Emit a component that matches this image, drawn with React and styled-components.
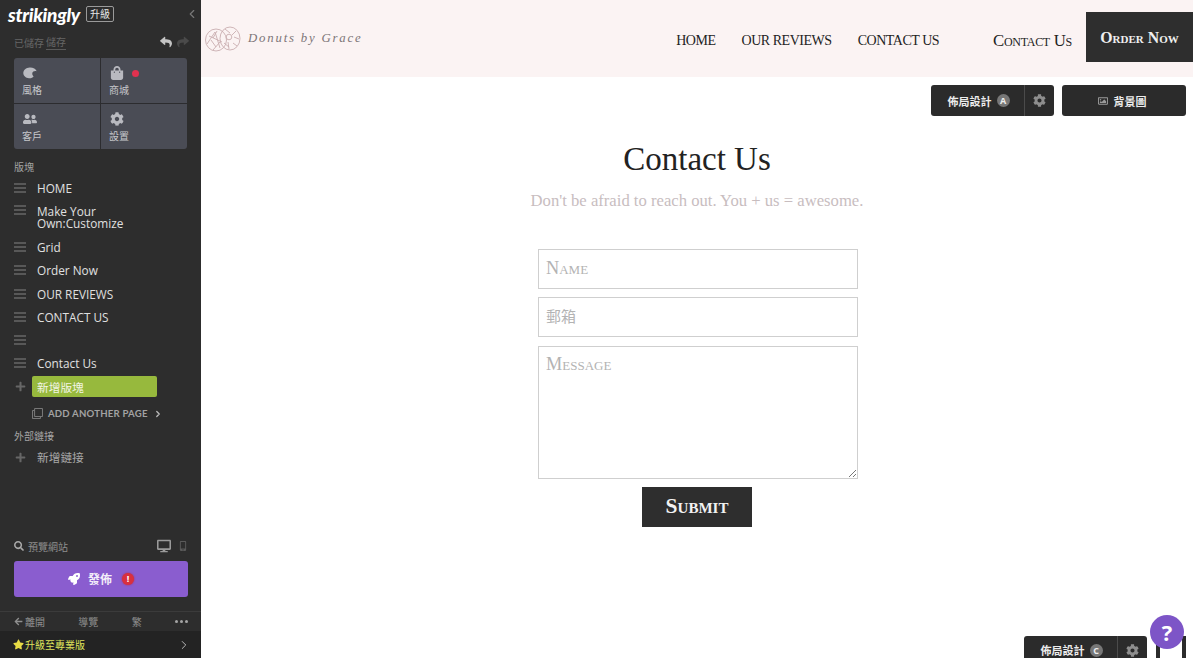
import React from "react";
import styled, { createGlobalStyle } from "styled-components";
import { FaShoppingBag, FaUserFriends, FaCog, FaReply, FaShare, FaRocket, FaSearch, FaStar, FaArrowLeft, FaPlus, FaRegImage, FaRegClone, FaMobileAlt, FaDesktop } from "react-icons/fa";
import { ChevronLeft, ChevronRight } from "lucide-react";

const CJK = `"Open Sans", "Noto Sans CJK TC", sans-serif`;
const SERIF = `"Liberation Serif", "Noto Sans CJK TC", serif`;

const Global = createGlobalStyle`
  html, body { margin: 0; padding: 0; height: 100%; overflow: hidden; background: #fff; }
  #root { height: 658px; }
  * { box-sizing: border-box; }
`;

const Page = styled.div`
  display: flex;
  width: 1193px;
  height: 658px;
  overflow: hidden;
  font-family: ${CJK};
`;

const Sidebar = styled.aside`
  width: 201px;
  flex: none;
  height: 100%;
  display: flex;
  flex-direction: column;
  background: #2d2d2d;
  color: #d6d6d6;
`;

const TopBar = styled.div`
  height: 28px;
  display: flex;
  align-items: center;
  padding: 0 2px 0 8px;
  flex: none;
`;
const Logo = styled.span`
  font: italic 900 19px/1 "Lato", sans-serif;
  letter-spacing: -0.3px;
  color: #fff;
  width: 78px;
`;
const UpgradeBadge = styled.span`
  width: 28px;
  height: 16px;
  border: 1px solid #9a9a9a;
  border-radius: 2px;
  font-size: 10px;
  line-height: 14px;
  text-align: center;
  color: #e6e6e6;
`;
const Collapse = styled.span`
  margin-left: auto;
  display: flex;
  color: #777;
`;

const SaveRow = styled.div`
  height: 30px;
  display: flex;
  align-items: center;
  padding: 0 12px 2px 14px;
  font-size: 10px;
  color: #666;
  flex: none;
`;
const SaveLink = styled.span`
  margin-left: 2px;
  border-bottom: 1px solid #5a5a5a;
`;
const UndoGroup = styled.span`
  margin-left: auto;
  display: flex;
  gap: 5px;
  font-size: 12px;
`;
const UndoIcon = styled.span`
  display: flex;
  color: ${p => (p.$off ? "#4a4a4a" : "#c4c4c4")};
`;

const Tiles = styled.div`
  margin: 0 14px;
  width: 173px;
  height: 91px;
  display: grid;
  grid-template-columns: 87px 86px;
  grid-template-rows: 45.5px 45.5px;
  border-radius: 3px;
  overflow: hidden;
  background: #4a4c55;
  flex: none;
`;
const Tile = styled.div`
  padding: 8px 0 0 8px;
  display: flex;
  flex-direction: column;
  gap: 3px;
  font-size: 10px;
  line-height: 14px;
  color: #c6c7cb;
  border-right: ${p => (p.$right ? "none" : "1px solid #2c2c2f")};
  border-bottom: ${p => (p.$bottom ? "none" : "1px solid #2c2c2f")};
`;
const TileIcon = styled.span`
  display: flex;
  align-items: center;
  gap: 8px;
  height: 14px;
  padding-left: 1px;
  font-size: 14px;
  color: #b9bac0;
`;
const RedDot = styled.i`
  width: 7px;
  height: 7px;
  border-radius: 50%;
  background: #e0314f;
`;

const SectionLabel = styled.div`
  padding-left: 14px;
  font-size: 10px;
  line-height: 14px;
  color: #a3a3a3;
  margin-top: ${p => p.$top || 0}px;
  flex: none;
`;
const Rows = styled.div`
  margin-top: 2px;
  display: flex;
  flex-direction: column;
  flex: none;
`;
const Row = styled.div`
  height: ${p => (p.$tall ? 36 : 23.3)}px;
  display: flex;
  align-items: ${p => (p.$tall ? "flex-start" : "center")};
  padding-left: 14px;
  font-size: 11.8px;
  line-height: 12px;
  color: ${p => (p.$dim ? "#a8a8a8" : "#e0e0e0")};
  padding-top: ${p => (p.$tall ? 6 : 0)}px;
`;
const Handle = styled.span`
  width: 12px;
  height: 10px;
  flex: none;
  margin-right: 11px;
  border-top: 2px solid #585858;
  border-bottom: 2px solid #585858;
  position: relative;
  &::after {
    content: "";
    position: absolute;
    left: 0;
    right: 0;
    top: 2px;
    height: 2px;
    background: #585858;
  }
`;
const PlusIcon = styled.span`
  width: 12px;
  flex: none;
  display: flex;
  justify-content: center;
  color: #666;
  font-size: 11px;
  margin-right: ${p => p.$gap}px;
`;
const AddSection = styled.div`
  width: 125px;
  height: 21px;
  display: flex;
  align-items: center;
  padding-left: 5px;
  background: #97b93d;
  border-radius: 2px;
  color: #f2f5e4;
  font-size: 11.7px;
`;
const AddPage = styled.div`
  height: 17px;
  margin-top: 7px;
  padding-left: 32px;
  display: flex;
  align-items: center;
  gap: 5px;
  font: 700 9.6px/1 "Lato", sans-serif;
  letter-spacing: 0.2px;
  color: #a2a2a2;
  flex: none;
`;
const SmallChevron = styled.span`
  display: flex;
  color: #bbb;
`;
const ExtLink = styled(Row)`
  margin-top: 2px;
  font-size: 11.7px;
  flex: none;
`;

const Bottom = styled.div`
  margin-top: auto;
  display: flex;
  flex-direction: column;
  flex: none;
`;
const PreviewRow = styled.div`
  height: 20px;
  display: flex;
  align-items: center;
  padding: 0 13px 0 14px;
  gap: 4px;
  font-size: 10px;
  color: #8d8d8d;
`;
const Devices = styled.span`
  margin-left: auto;
  display: flex;
  align-items: center;
  gap: 7px;
`;
const Device = styled.span`
  display: flex;
  font-size: ${p => p.$size}px;
  color: ${p => (p.$off ? "#5a5a5a" : "#9a9a9a")};
`;
const Publish = styled.div`
  margin: 5px 13px 0 14px;
  height: 36px;
  border-radius: 3px;
  background: #8a5dcf;
  display: flex;
  align-items: center;
  justify-content: center;
  gap: 8px;
  color: #f3eef9;
  font-size: 12px;
  font-weight: 700;
`;
const Alert = styled.span`
  width: 12px;
  height: 12px;
  margin-left: 2px;
  border-radius: 50%;
  background: #d9303f;
  box-shadow: 0 0 2px #b52a3e;
  color: #fff;
  font-size: 9px;
  line-height: 12px;
  text-align: center;
`;
const FootNav = styled.div`
  margin-top: 14px;
  height: 20px;
  border-top: 1px solid #3b3b3b;
  padding: 0 13px 0 14px;
  display: flex;
  align-items: center;
  justify-content: space-between;
  font-size: 10px;
  color: #8f8f8f;
`;
const Leave = styled.span`
  display: flex;
  align-items: center;
  gap: 2px;
`;
const Dots = styled.span`
  display: flex;
  gap: 2px;
`;
const Dot = styled.i`
  width: 3px;
  height: 3px;
  border-radius: 50%;
  background: #a5a5a5;
`;
const ProBar = styled.div`
  height: 27px;
  background: #232323;
  display: flex;
  align-items: center;
  padding: 0 10px 0 13px;
  gap: 1px;
  font-size: 10px;
  color: #dfe35c;
`;
const ProChevron = styled.span`
  margin-left: auto;
  display: flex;
  color: #c9c9c9;
`;

const Main = styled.main`
  flex: 1;
  min-width: 0;
  height: 100%;
  position: relative;
  overflow: hidden;
  background: #fff;
`;
const Header = styled.header`
  height: 77px;
  background: #fbf3f3;
  display: flex;
  align-items: center;
  padding-left: 4px;
`;
const Brand = styled.div`
  display: flex;
  align-items: center;
  gap: 7px;
  font: italic 400 12.8px/1 "Liberation Serif", serif;
  letter-spacing: 1.8px;
  color: #7d7678;
`;
const Nav = styled.nav`
  margin-left: auto;
  display: flex;
  align-items: center;
  height: 50px;
  margin-top: -3px;
`;
const NavLink = styled.a`
  margin-right: ${p => p.$mr}px;
  font: 400 14px/1 ${SERIF};
  letter-spacing: -0.47px;
  color: #232323;
  white-space: nowrap;
  padding-top: 8px;
`;
const SmallCapsLink = styled(NavLink)`
  font-size: 16.8px;
  font-variant: small-caps;
  letter-spacing: -0.3px;
`;
const OrderButton = styled.a`
  width: 107px;
  height: 50px;
  background: #2e2e2e;
  color: #efefef;
  display: flex;
  align-items: center;
  justify-content: center;
  font: 700 15.8px/1 ${SERIF};
  font-variant: small-caps;
  padding-top: 2px;
`;

const Tool = styled.div`
  position: absolute;
  display: flex;
  align-items: center;
  background: #2b2b2b;
  border-radius: 3px;
  color: #ececec;
  font-size: 11px;
  font-weight: 700;
  height: ${p => p.$h || 31}px;
  left: ${p => p.$left}px;
  top: ${p => p.$top}px;
  width: ${p => p.$w}px;
`;
const ToolMain = styled.span`
  flex: 1;
  display: flex;
  align-items: center;
  justify-content: center;
  gap: 5px;
  height: 100%;
  padding-left: 2px;
`;
const BackgroundMain = styled(ToolMain)`
  padding-left: 0;
  padding-right: 4px;
`;
const ToolGear = styled.span`
  width: 30px;
  height: 100%;
  display: flex;
  align-items: center;
  justify-content: center;
  border-left: 1px solid #4b4b4b;
  color: #8e8e8e;
  font-size: 13px;
`;
const Key = styled.span`
  width: 13px;
  height: 13px;
  border-radius: 50%;
  background: #777;
  color: #eee;
  font-size: 9px;
  line-height: 13px;
  text-align: center;
`;
const ImgIcon = styled.span`
  display: flex;
  font-size: 10px;
  color: #9a9a9a;
  margin-right: 1px;
`;

const Section = styled.section`
  display: flex;
  flex-direction: column;
  align-items: center;
`;
const Title = styled.h1`
  margin: 61px 0 0;
  font: 400 33px/42px ${SERIF};
  color: #222;
`;
const Sub = styled.p`
  margin: 9px 0 0;
  font: 400 16.65px/24px ${SERIF};
  color: #c8bdbf;
`;
const Form = styled.form`
  margin: 36px 0 0 2px;
  display: flex;
  flex-direction: column;
  align-items: center;
  width: 320px;
`;
const Field = styled.div`
  width: 320px;
  height: ${p => p.$h || 40}px;
  margin-bottom: ${p => p.$mb || 8}px;
  padding: ${p => (p.$area ? "7px 7px" : `0 7px ${p.$lift || 0}px`)};
  display: flex;
  align-items: ${p => (p.$area ? "flex-start" : "center")};
  border: 1px solid #cfcfcf;
  font: 400 ${p => p.$fs || 18.3}px/20px ${SERIF};
  font-variant: small-caps;
  color: #b3b3b3;
  position: relative;
`;
const Grip = styled.svg`
  position: absolute;
  right: 0;
  bottom: 0;
  width: 9px;
  height: 9px;
`;
const Submit = styled.div`
  width: 110px;
  height: 40px;
  margin-right: 2px;
  background: #2e2e2e;
  color: #f2f2f2;
  display: flex;
  align-items: center;
  justify-content: center;
  font: 700 21.5px/1 ${SERIF};
  font-variant: small-caps;
`;
const Help = styled.div`
  position: absolute;
  left: 949px;
  top: 615px;
  width: 34px;
  height: 34px;
  border-radius: 50%;
  background: #7d55c7;
  color: #fff;
  display: flex;
  align-items: center;
  justify-content: center;
  font: 700 22px/1 "Open Sans", sans-serif;
  z-index: 2;
`;
const Outlined = styled.div`
  position: absolute;
  left: 955px;
  top: 636px;
  width: 30px;
  height: 40px;
  border: 4px solid #2b2b2b;
`;

const DonutLogo = () => (
  <svg width="36" height="28" viewBox="0 0 36 28" fill="none" stroke="#c9aeb0" strokeWidth="0.9">
    <ellipse cx="11" cy="15" rx="10.5" ry="11" />
    <ellipse cx="25" cy="13.5" rx="10" ry="11.5" />
    <circle cx="24" cy="12" r="2.8" />
    <path d="M2 19 L10 7 L15 23 M4 11 L17 17 M8 25 L15 17 M6 15 L11 22 M12 6 L8 13 M20 4 L25 8 M28 18 L32 21 M19 18 L24 22 M31 6 L27 10 M29 12 L34 14 M23 17 L24 24" />
  </svg>
);

const PaletteIcon = () => (
  <svg width="14" height="12" viewBox="0 0 14 12" fill="currentColor">
    <path d="M6.8 0.5C10 0.4 13 1.8 13.7 4.2 11.6 3.6 9.6 4.4 9.3 6.1 9 7.8 9.9 8.7 10.6 9.6 9.6 10.9 7.9 11.5 6 11.3 2.7 11 0.3 8.8 0.3 6 0.3 3 3 0.6 6.8 0.5Z" />
  </svg>
);

const SECTIONS = ["Grid", "Order Now", "OUR REVIEWS", "CONTACT US", "", "Contact Us"];

export default function App() {
  return (
    <Page>
      <Global />
      <Sidebar>
        <TopBar>
          <Logo>strikingly</Logo>
          <UpgradeBadge>升級</UpgradeBadge>
          <Collapse><ChevronLeft size={14} strokeWidth={2} /></Collapse>
        </TopBar>
        <SaveRow>
          已儲存<SaveLink>儲存</SaveLink>
          <UndoGroup>
            <UndoIcon><FaReply /></UndoIcon>
            <UndoIcon $off><FaShare /></UndoIcon>
          </UndoGroup>
        </SaveRow>
        <Tiles>
          <Tile><TileIcon><PaletteIcon /></TileIcon>風格</Tile>
          <Tile $right><TileIcon><FaShoppingBag /><RedDot /></TileIcon>商城</Tile>
          <Tile $bottom><TileIcon><FaUserFriends /></TileIcon>客戶</Tile>
          <Tile $right $bottom><TileIcon><FaCog /></TileIcon>設置</Tile>
        </Tiles>
        <SectionLabel $top={11}>版塊</SectionLabel>
        <Rows>
          <Row><Handle />HOME</Row>
          <Row $tall><Handle /><span>Make Your<br />Own:Customize</span></Row>
          {SECTIONS.map((s, i) => <Row key={i}><Handle />{s}</Row>)}
          <Row>
            <PlusIcon $gap={6}><FaPlus /></PlusIcon>
            <AddSection>新增版塊</AddSection>
          </Row>
        </Rows>
        <AddPage>
          <FaRegClone size={11} color="#777" />ADD ANOTHER PAGE<SmallChevron><ChevronRight size={10} strokeWidth={3} /></SmallChevron>
        </AddPage>
        <SectionLabel $top={7}>外部鏈接</SectionLabel>
        <ExtLink $dim>
          <PlusIcon $gap={11}><FaPlus /></PlusIcon>新增鏈接
        </ExtLink>
        <Bottom>
          <PreviewRow>
            <FaSearch size={10} color="#a8a8a8" />預覽網站
            <Devices>
              <Device $size={14}><FaDesktop /></Device>
              <Device $size={10} $off><FaMobileAlt /></Device>
            </Devices>
          </PreviewRow>
          <Publish><FaRocket size={12} color="#fff" />發佈<Alert>!</Alert></Publish>
          <FootNav>
            <Leave><FaArrowLeft size={9} />離開</Leave>
            <span>導覽</span>
            <span>繁</span>
            <Dots><Dot /><Dot /><Dot /></Dots>
          </FootNav>
          <ProBar>
            <FaStar size={11} color="#e8dc45" />升級至專業版
            <ProChevron><ChevronRight size={14} strokeWidth={1.5} /></ProChevron>
          </ProBar>
        </Bottom>
      </Sidebar>
      <Main>
        <Header>
          <Brand><DonutLogo />Donuts by Grace</Brand>
          <Nav>
            <NavLink $mr={26}>HOME</NavLink>
            <NavLink $mr={26}>OUR REVIEWS</NavLink>
            <NavLink $mr={54}>CONTACT US</NavLink>
            <SmallCapsLink $mr={14}>Contact Us</SmallCapsLink>
            <OrderButton>Order Now</OrderButton>
          </Nav>
        </Header>
        <Tool $left={730} $top={85} $w={123}>
          <ToolMain>佈局設計<Key>A</Key></ToolMain>
          <ToolGear><FaCog /></ToolGear>
        </Tool>
        <Tool $left={861} $top={85} $w={124}>
          <BackgroundMain><ImgIcon><FaRegImage /></ImgIcon>背景圖</BackgroundMain>
        </Tool>
        <Section>
          <Title>Contact Us</Title>
          <Sub>Don't be afraid to reach out. You + us = awesome.</Sub>
          <Form>
            <Field $lift={3}>Name</Field>
            <Field $mb={9} $fs={15}>郵箱</Field>
            <Field $area $h={133}>
              Message
              <Grip viewBox="0 0 9 9" stroke="#777" strokeWidth="1">
                <path d="M1 8 L8 1 M5 8 L8 5" />
              </Grip>
            </Field>
            <Submit>Submit</Submit>
          </Form>
        </Section>
        <Tool $left={823} $top={636} $w={123} $h={28}>
          <ToolMain>佈局設計<Key>C</Key></ToolMain>
          <ToolGear><FaCog /></ToolGear>
        </Tool>
        <Outlined />
        <Help>?</Help>
      </Main>
    </Page>
  );
}
